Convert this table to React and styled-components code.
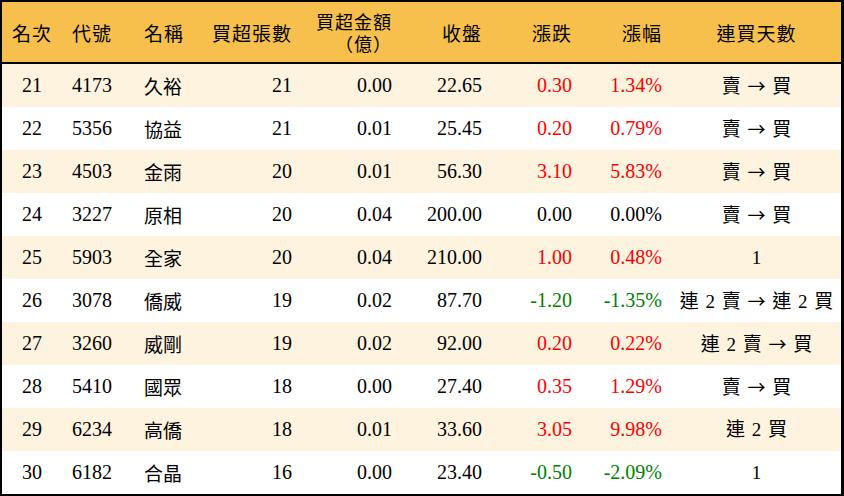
import React from "react";
import styled, { createGlobalStyle } from "styled-components";

const GlobalStyle = createGlobalStyle`
  html, body {
    margin: 0;
    padding: 0;
    background: #ffffff;
  }
  * {
    box-sizing: border-box;
  }
`;

const COLS = "60px 72px 72px 96px 100px 90px 90px 90px 169px";

const Table = styled.div`
  width: 844px;
  border-style: solid;
  border-color: #000000;
  border-width: 2px 3px 2px 2px;
  font-family: "Liberation Serif", "Noto Sans CJK TC", serif;
  font-size: 20px;
  color: #000000;
`;

const HeaderRow = styled.div`
  display: grid;
  grid-template-columns: ${COLS};
  height: 62px;
  background: #f7c04c;
  border-bottom: 2px solid #000000;
`;

const Row = styled.div`
  display: grid;
  grid-template-columns: ${COLS};
  height: 43px;
  background: ${(p) => (p.$alt ? "#fdf3df" : "#ffffff")};
`;

const Cell = styled.div`
  display: flex;
  align-items: center;
  justify-content: ${(p) =>
    p.$align === "left" ? "flex-start" : p.$align === "right" ? "flex-end" : "center"};
  text-align: ${(p) => p.$align || "center"};
  padding: ${(p) =>
    p.$align === "left" ? "0 0 0 10px" : p.$align === "right" ? "0 10px 0 0" : "0"};
  color: ${(p) => p.$color || "#000000"};
  white-space: nowrap;
  line-height: 21px;
`;

const HeadCell = styled(Cell)`
  font-family: "Noto Sans CJK TC", "Liberation Serif", sans-serif;
  font-size: 19px;
  letter-spacing: 1px;
`;

const TwoLine = styled.span`
  display: block;
  text-align: right;
  font-size: 18px;
  line-height: 22px;
`;

const Name = styled.span`
  font-family: "Noto Sans CJK TC", sans-serif;
  font-size: 19px;
`;

const Days = styled.span`
  font-family: "Liberation Serif", "Noto Sans CJK TC", serif;
  font-size: 19px;
  word-spacing: 2px;
`;

const Arrow = styled.span`
  font-family: "Noto Sans CJK TC", sans-serif;
  font-size: 18px;
`;

const RED = "#ff0000";
const GREEN = "#008000";

const rows = [
  [21, "4173", "久裕", 21, "0.00", "22.65", "0.30", "1.34%", "賣 → 買"],
  [22, "5356", "協益", 21, "0.01", "25.45", "0.20", "0.79%", "賣 → 買"],
  [23, "4503", "金雨", 20, "0.01", "56.30", "3.10", "5.83%", "賣 → 買"],
  [24, "3227", "原相", 20, "0.04", "200.00", "0.00", "0.00%", "賣 → 買"],
  [25, "5903", "全家", 20, "0.04", "210.00", "1.00", "0.48%", "1"],
  [26, "3078", "僑威", 19, "0.02", "87.70", "-1.20", "-1.35%", "連 2 賣 → 連 2 買"],
  [27, "3260", "威剛", 19, "0.02", "92.00", "0.20", "0.22%", "連 2 賣 → 買"],
  [28, "5410", "國眾", 18, "0.00", "27.40", "0.35", "1.29%", "賣 → 買"],
  [29, "6234", "高僑", 18, "0.01", "33.60", "3.05", "9.98%", "連 2 買"],
  [30, "6182", "合晶", 16, "0.00", "23.40", "-0.50", "-2.09%", "1"],
];

const changeColor = (v) => {
  const n = parseFloat(v);
  if (n > 0) return RED;
  if (n < 0) return GREEN;
  return "#000000";
};

// split on the arrow so it can use the wider CJK glyph
const renderDays = (text) => {
  const parts = text.split("→");
  if (parts.length === 1) return text;
  return (
    <>
      {parts[0]}
      <Arrow>→</Arrow>
      {parts[1]}
    </>
  );
};

const App = () => {
  return (
    <>
      <GlobalStyle />
      <Table>
        <HeaderRow>
          <HeadCell>名次</HeadCell>
          <HeadCell $align="left">代號</HeadCell>
          <HeadCell $align="left">名稱</HeadCell>
          <HeadCell $align="right">買超張數</HeadCell>
          <HeadCell $align="right">
            <TwoLine>
              買超金額
              <br />
              （億）
            </TwoLine>
          </HeadCell>
          <HeadCell $align="right">收盤</HeadCell>
          <HeadCell $align="right">漲跌</HeadCell>
          <HeadCell $align="right">漲幅</HeadCell>
          <HeadCell>連買天數</HeadCell>
        </HeaderRow>
        {rows.map((r, i) => (
          <Row key={r[0]} $alt={i % 2 === 0}>
            <Cell>{r[0]}</Cell>
            <Cell $align="left">{r[1]}</Cell>
            <Cell $align="left">
              <Name>{r[2]}</Name>
            </Cell>
            <Cell $align="right">{r[3]}</Cell>
            <Cell $align="right">{r[4]}</Cell>
            <Cell $align="right">{r[5]}</Cell>
            <Cell $align="right" $color={changeColor(r[6])}>
              {r[6]}
            </Cell>
            <Cell $align="right" $color={changeColor(r[6])}>
              {r[7]}
            </Cell>
            <Cell>
              <Days>{renderDays(r[8])}</Days>
            </Cell>
          </Row>
        ))}
      </Table>
    </>
  );
};

export default App;
